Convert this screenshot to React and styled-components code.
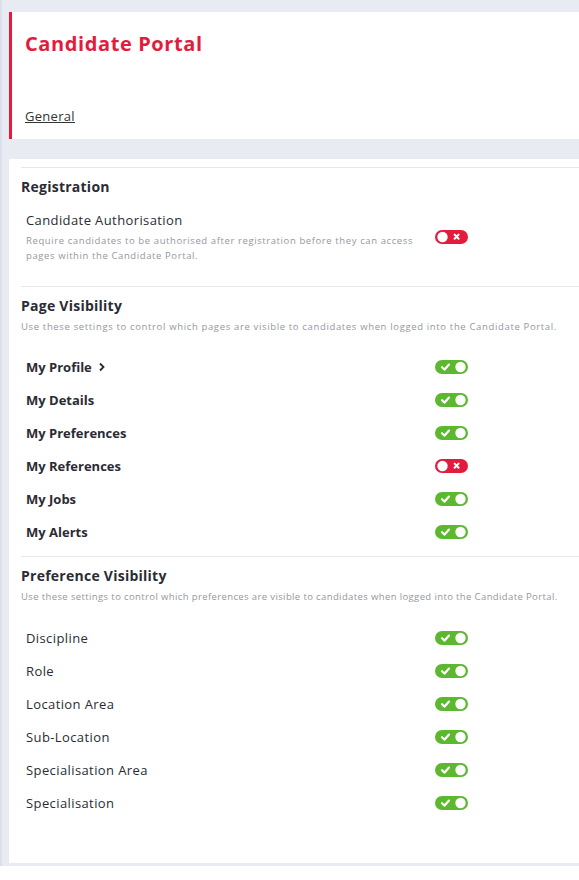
import React from "react";
import styled, { createGlobalStyle } from "styled-components";

const GlobalStyle = createGlobalStyle`
  body {
    margin: 0;
    background: #ffffff;
    font-family: "Open Sans", "Liberation Sans", sans-serif;
    color: #2b2b33;
  }
`;

const pages = [
  { label: "My Profile", on: true, more: true },
  { label: "My Details", on: true },
  { label: "My Preferences", on: true },
  { label: "My References", on: false },
  { label: "My Jobs", on: true },
  { label: "My Alerts", on: true },
];

const preferences = [
  "Discipline",
  "Role",
  "Location Area",
  "Sub-Location",
  "Specialisation Area",
  "Specialisation",
];

const Toggle = ({ on }) => (
  <ToggleSvg viewBox="0 0 33 14" width="33" height="14">
    <rect x="0" y="0" width="33" height="14" rx="7" fill={on ? "#5cb82e" : "#e31b3d"} />
    {on ? (
      <>
        <path d="M7 7.2 L9.6 9.6 L14 4.6" stroke="#fff" strokeWidth="2.2" fill="none" strokeLinecap="round" strokeLinejoin="round" />
        <circle cx="25.5" cy="7" r="5.2" fill="#fff" />
      </>
    ) : (
      <>
        <circle cx="7.5" cy="7" r="5.2" fill="#fff" />
        <path d="M19.6 4.6 L23.6 8.8 M23.6 4.6 L19.6 8.8" stroke="#fff" strokeWidth="2" strokeLinecap="round" />
      </>
    )}
  </ToggleSvg>
);

const Chevron = () => (
  <svg width="8" height="10" viewBox="0 0 8 10">
    <path d="M2 1.5 L5.5 5 L2 8.5" stroke="#2b2b33" strokeWidth="1.8" fill="none" />
  </svg>
);

const App = () => {
  return (
    <>
      <GlobalStyle />
      <Page>
        <Header>
          <Title>Candidate Portal</Title>
          <TabLink href="#">General</TabLink>
        </Header>
        <Body>
          <Section>
            <Heading>Registration</Heading>
            <SettingRow>
              <div>
                <SettingName>Candidate Authorisation</SettingName>
                <SettingHelp>
                  Require candidates to be authorised after registration before they can access
                  pages within the Candidate Portal.
                </SettingHelp>
              </div>
              <Toggle on={false} />
            </SettingRow>
          </Section>
          <Section>
            <Heading>Page Visibility</Heading>
            <Intro spacing="0.65px">
              Use these settings to control which pages are visible to candidates when logged into the Candidate Portal.
            </Intro>
            <List>
              {pages.map((p) => (
                <Row key={p.label}>
                  <Label bold>
                    {p.label}
                    {p.more && <Chevron />}
                  </Label>
                  <Toggle on={p.on} />
                </Row>
              ))}
            </List>
          </Section>
          <Section>
            <Heading>Preference Visibility</Heading>
            <Intro spacing="0.38px">
              Use these settings to control which preferences are visible to candidates when logged into the Candidate Portal.
            </Intro>
            <List top="17px">
              {preferences.map((p) => (
                <Row key={p}>
                  <Label>{p}</Label>
                  <Toggle on />
                </Row>
              ))}
            </List>
          </Section>
        </Body>
      </Page>
    </>
  );
};

const Page = styled.div`
  background: #e9ebf3;
  border-left: 2px solid #dcdfe9;
  padding: 12px 0 3px 7px;
`;

const Header = styled.header`
  background: #fff;
  border-left: 3px solid #e31b3d;
  height: 127px;
  box-sizing: border-box;
  padding: 19px 0 0 13px;
  display: flex;
  flex-direction: column;
  margin-bottom: 20px;
`;

const Title = styled.h1`
  margin: 0;
  font-size: 20px;
  line-height: 26px;
  font-weight: 700;
  letter-spacing: 0.6px;
  color: #e31b3d;
`;

const TabLink = styled.a`
  margin-top: auto;
  margin-bottom: 14px;
  font-size: 13px;
  line-height: 18px;
  letter-spacing: 0.3px;
  color: #333;
  text-decoration: underline;
  align-self: flex-start;
`;

const Body = styled.main`
  background: #fff;
  height: 704px;
  box-sizing: border-box;
  padding: 8px 0 0 12px;
`;

const Section = styled.section`
  border-top: 1px solid #e6e8ef;
  padding-top: 9px;
  padding-bottom: 8px;
`;

const Heading = styled.h2`
  margin: 0;
  font-size: 14px;
  line-height: 20px;
  font-weight: 700;
  letter-spacing: 0.25px;
  color: #2b2b33;
`;

const Intro = styled.p`
  margin: 4px 0 0;
  font-size: 9.5px;
  line-height: 14px;
  letter-spacing: ${(p) => p.spacing || "0.6px"};
  white-space: nowrap;
  color: #95979e;
`;

const SettingRow = styled.div`
  display: grid;
  grid-template-columns: 409px 33px;
  align-items: center;
  padding: 14px 0 15px 5px;
`;

const SettingName = styled.div`
  font-size: 13px;
  line-height: 18px;
  letter-spacing: 0.4px;
  color: #2b2b33;
`;

const SettingHelp = styled.div`
  margin-top: 4px;
  font-size: 9.5px;
  line-height: 15px;
  letter-spacing: 0.6px;
  color: #95979e;
  width: 400px;
`;

const List = styled.div`
  padding-top: ${(p) => p.top || "16px"};
`;

const Row = styled.div`
  display: grid;
  grid-template-columns: 409px 33px;
  align-items: center;
  height: 33px;
  padding-left: 5px;
`;

const Label = styled.span`
  display: flex;
  align-items: center;
  gap: 6px;
  font-size: 13px;
  letter-spacing: ${(p) => (p.bold ? "0px" : "0.4px")};
  font-weight: ${(p) => (p.bold ? 700 : 400)};
  color: #2b2b33;
`;

const ToggleSvg = styled.svg`
  display: block;
`;

export default App;
